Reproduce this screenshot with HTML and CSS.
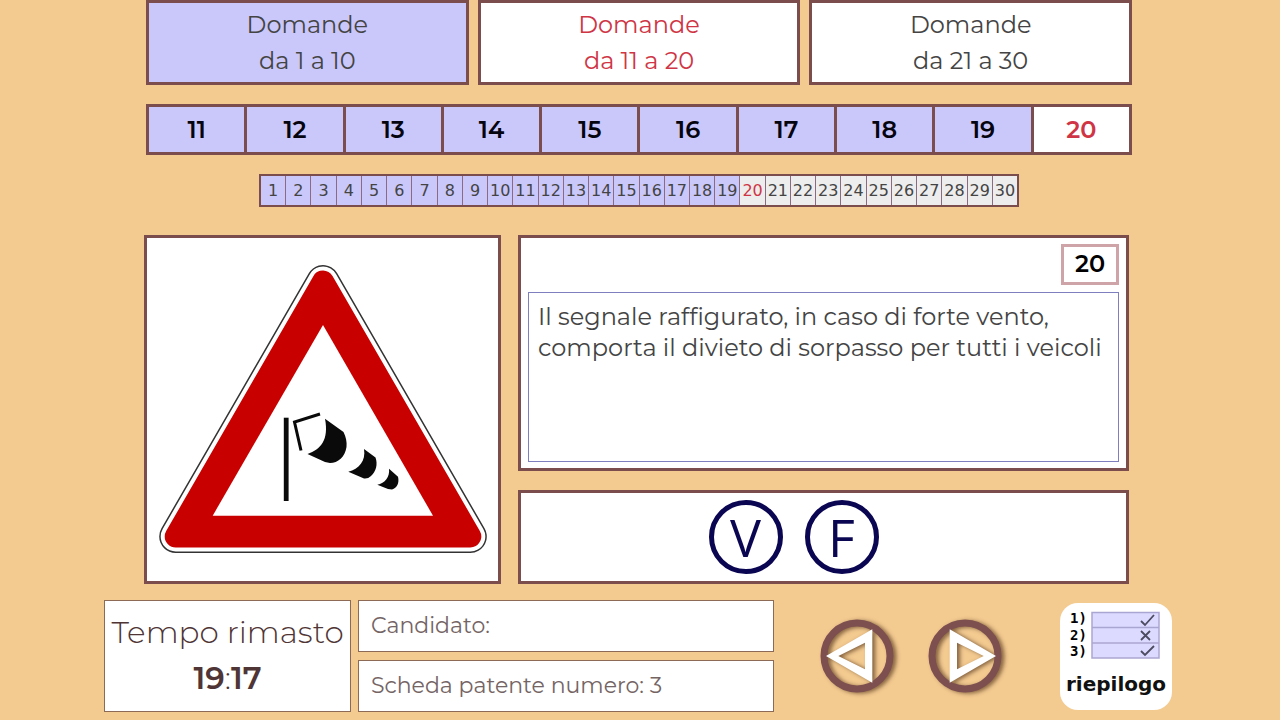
FILE: index.html
```
<!DOCTYPE html>
<html lang="it">
<head>
    <meta charset="UTF-8">
    <title>Quiz patente</title>
    <link rel="stylesheet" href="styles.css">
</head>
<body>
    <nav class="navigation">
        <div class="tabs">
            <button class="done">Domande<br>da 1 a 10</button>
            <button class="current">Domande<br>da 11 a 20</button>
            <button>Domande<br>da 21 a 30</button>
        </div>

        <div class="questions">
            <button>11</button>
            <button>12</button>
            <button>13</button>
            <button>14</button>
            <button>15</button>
            <button>16</button>
            <button>17</button>
            <button>18</button>
            <button>19</button>
            <button class="current">20</button>
        </div>

        <div class="strip">
            <button class="done">1</button>
            <button class="done">2</button>
            <button class="done">3</button>
            <button class="done">4</button>
            <button class="done">5</button>
            <button class="done">6</button>
            <button class="done">7</button>
            <button class="done">8</button>
            <button class="done">9</button>
            <button class="done">10</button>
            <button class="done">11</button>
            <button class="done">12</button>
            <button class="done">13</button>
            <button class="done">14</button>
            <button class="done">15</button>
            <button class="done">16</button>
            <button class="done">17</button>
            <button class="done">18</button>
            <button class="done">19</button>
            <button class="current">20</button>
            <button>21</button>
            <button>22</button>
            <button>23</button>
            <button>24</button>
            <button>25</button>
            <button>26</button>
            <button>27</button>
            <button>28</button>
            <button>29</button>
            <button>30</button>
        </div>
    </nav>

    <main class="quiz">
        <div class="box sign">
            <svg viewBox="0 0 351 343" role="img" aria-label="Segnale di forte vento laterale">
                <g stroke-linejoin="round">
                    <path d="M176 43.5 L323.3 298.5 H28.7 Z" fill="#333" stroke="#333" stroke-width="33"/>
                    <path d="M176 43.5 L323.3 298.5 H28.7 Z" fill="#fff" stroke="#fff" stroke-width="30"/>
                    <path d="M176 43.5 L323.3 298.5 H28.7 Z" fill="#c80000" stroke="#c80000" stroke-width="22"/>
                </g>
                <path d="M176 87 L286 277.7 H65.7 Z" fill="#fff"/>
                <!-- manica a vento -->
                <path d="M139.2 179.7 V263" stroke="#0a0a0a" stroke-width="4.8"/>
                <path d="M173 176 L147.5 184 L154 212.5" fill="none" stroke="#0a0a0a" stroke-width="3"/>
                <g fill="#0a0a0a">
                    <path d="M178 180.7 L196.5 194 C199 199 200 204 199.5 209 C198 219 191 225 183 225 L178 224 L160.5 216 C174 211 182 202 178 180.7 Z"/>
                    <path d="M217 211 L228.5 219.5 C231 226 229 234 224 238 Q221 241 217 240.5 L201.3 233.7 C212 231 219 223 217 211 Z"/>
                    <path d="M242 230.7 L251 238.7 C252.5 245 250 250 245 251.5 L241 251 L230.3 246.7 C238 245 243 239 242 230.7 Z"/>
                </g>
            </svg>
        </div>

        <div class="right">
            <div class="box question">
                <span class="number">20</span>
                <p class="text">Il segnale raffigurato, in caso di forte vento,<br>comporta il divieto di sorpasso per tutti i veicoli</p>
            </div>
            <div class="box answers">
                <button aria-label="Vero">V</button>
                <button aria-label="Falso">F</button>
            </div>
        </div>
    </main>

    <footer class="bottom">
        <div class="timer">
            <span>Tempo rimasto</span>
            <span class="time"><b>19</b>:<b>17</b></span>
        </div>
        <div class="info">
            <div>Candidato:</div>
            <div>Scheda patente numero: 3</div>
        </div>
        <div class="arrows">
            <button aria-label="Precedente">
                <svg viewBox="0 0 84 84">
                    <circle cx="42" cy="42" r="33" fill="none" stroke="#7d4f4f" stroke-width="7"/>
                    <path d="M11 42 L57.3 15.3 V68.7 Z M23.3 42 L50 55.3 V28.7 Z" fill="#fff" fill-rule="evenodd"/>
                </svg>
            </button>
            <button aria-label="Successiva">
                <svg viewBox="0 0 84 84">
                    <circle cx="42" cy="42" r="33" fill="none" stroke="#7d4f4f" stroke-width="7"/>
                    <path d="M73 42 L26.7 15.3 V68.7 Z M60.7 42 L34 55.3 V28.7 Z" fill="#fff" fill-rule="evenodd"/>
                </svg>
            </button>
        </div>
        <button class="summary">
            <svg viewBox="0 0 92 52" aria-hidden="true">
                <g class="rows">
                    <text x="0" y="14">1)</text>
                    <text x="0" y="31">2)</text>
                    <text x="0" y="47">3)</text>
                </g>
                <path d="M22 3.5 H89 V49 H22 Z M22 18.5 H89 M22 34 H89" fill="#dcdaff" stroke="#aaa6d2" stroke-width="1.5"/>
                <path d="M71 12 L75 16 L84 6 M71 22 L80 31 M80 22 L71 31 M71 42 L75 46 L84 37" fill="none" stroke="#4d4b60" stroke-width="1.8"/>
            </svg>
            riepilogo
        </button>
    </footer>
</body>
</html>
```
FILE: styles.css
```
* {
    box-sizing: border-box;
}

body {
    margin: 0;
    background-color: #f3ca90;
    color: #444;
    font-family: Montserrat, Inter, sans-serif;
    font-weight: 400;
}

button {
    margin: 0;
    padding: 0;
    border: none;
    background-color: white;
    color: inherit;
    font: inherit;
    cursor: pointer;
}

.navigation {
    display: flex;
    flex-direction: column;
    gap: 19px;
    padding: 0 148px 0 146px;
}

.tabs {
    display: flex;
    gap: 9px;
}

.tabs button {
    flex: 1;
    height: 85px;
    border: 3px solid #7b4d4c;
    font-size: 24px;
    line-height: 36px;
}

.navigation .done {
    background-color: #cac8fb;
}

.navigation .current {
    background-color: white;
    color: #cf3545;
}

.questions {
    display: flex;
    height: 51px;
    border: 3px solid #7b4d4c;
}

.questions button {
    flex: 1;
    background-color: #cac8fb;
    color: #050510;
    font-size: 24px;
    font-weight: 600;
}

.questions button + button {
    border-left: 3px solid #7b4d4c;
}

.strip {
    display: flex;
    align-self: center;
    width: 760px;
    max-width: 100%;
    height: 33px;
    border: 2px solid #7b4d4c;
}

.strip button {
    flex: 1;
    background-color: #ededed;
    font-family: "DejaVu Sans", sans-serif;
    font-size: 16px;
    font-weight: 400;
}

.strip button + button {
    border-left: 1px solid #8c6a80;
}

.navigation .strip .current {
    background-color: #ededed;
}

.quiz {
    display: flex;
    gap: 17px;
    padding: 28px 151px 16px 144px;
}

.box {
    border: 3px solid #7b4d4c;
    background-color: white;
}

.sign {
    width: 357px;
    height: 349px;
}

.sign svg {
    display: block;
    width: 100%;
}

.right {
    display: flex;
    flex: 1;
    flex-direction: column;
    gap: 19px;
}

.question {
    display: flex;
    flex: 1;
    flex-direction: column;
    gap: 7px;
    padding: 6px 7px;
}

.number {
    align-self: flex-end;
    width: 58px;
    height: 41px;
    border: 3px solid #cfa4a8;
    color: black;
    font-size: 24px;
    font-weight: 600;
    line-height: 33px;
    text-align: center;
}

.text {
    flex: 1;
    margin: 0;
    padding: 8px 9px;
    border: 1px solid #7f7fc0;
    font-size: 24px;
    line-height: 31px;
}

.answers {
    display: flex;
    justify-content: center;
    align-items: center;
    gap: 22px;
    height: 94px;
    padding-right: 60px;
}

.answers button {
    width: 74px;
    height: 74px;
    border: 5px solid #0a0652;
    border-radius: 50%;
    color: #0a0652;
    font-family: "Open Sans", sans-serif;
    font-size: 52px;
    font-weight: 400;
    line-height: 64px;
}

.bottom {
    display: flex;
    height: 112px;
    padding: 0 108px 0 104px;
    color: #4f3535;
}

.timer {
    display: flex;
    flex-direction: column;
    align-items: center;
    width: 247px;
    margin-right: 7px;
    padding-top: 8px;
    border: 1px solid #8c6a55;
    background-color: white;
    font-size: 31px;
    font-weight: 300;
    line-height: 46px;
    white-space: nowrap;
}

.time b {
    font-weight: 600;
}

.info {
    display: flex;
    flex: 1;
    flex-direction: column;
    gap: 8px;
    font-size: 22px;
}

.info div {
    display: flex;
    flex: 1;
    align-items: center;
    padding: 0 12px 2px;
    border: 1px solid #8c6a55;
    background-color: white;
    color: #746464;
}

.arrows {
    display: flex;
    align-items: center;
    gap: 24px;
    padding: 0 53px 0 41px;
}

.arrows button {
    width: 84px;
    height: 84px;
    background: none;
}

.arrows svg {
    display: block;
    filter: drop-shadow(3px 1px 2px rgba(60, 30, 10, 0.6));
}

.summary {
    display: flex;
    flex-direction: column;
    align-items: center;
    align-self: center;
    width: 112px;
    height: 107px;
    padding: 6px 0;
    border-radius: 18px;
    color: #111;
    font-family: "DejaVu Sans", sans-serif;
    font-size: 20px;
    font-weight: 700;
    line-height: 30px;
}

.summary svg {
    width: 92px;
    margin-bottom: 8px;
}

.rows {
    font-family: "DejaVu Sans Mono", monospace;
    font-size: 14px;
}
```
